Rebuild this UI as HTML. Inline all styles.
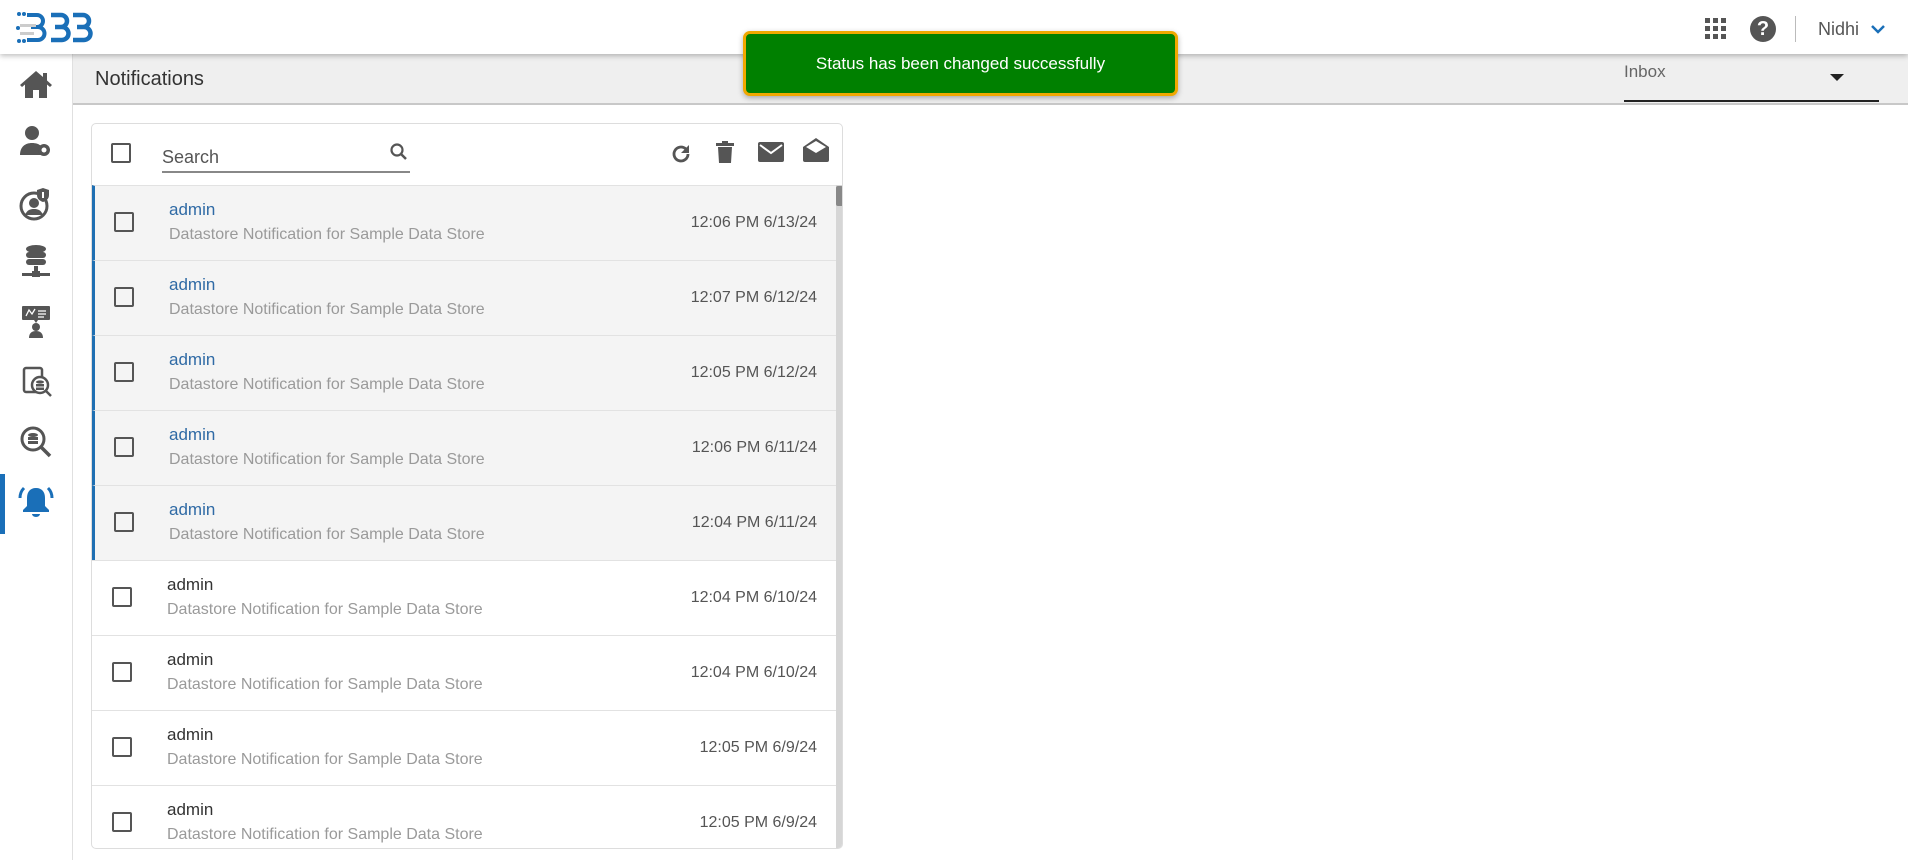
<!DOCTYPE html>
<html><head><meta charset="utf-8"><style>
*{box-sizing:border-box;margin:0;padding:0}
body{width:1908px;height:860px;overflow:hidden;background:#fff;font-family:"Liberation Sans",sans-serif;position:relative}
.abs{position:absolute}
.hdr{left:0;top:0;width:1908px;height:54px;background:#fff;box-shadow:0 2px 5px rgba(0,0,0,.25);z-index:5}
.side{left:0;top:54px;width:73px;height:806px;background:#fff;border-right:1px solid #e0e0e0}
.sub{left:73px;top:54px;width:1835px;height:51px;background:#efefef;border-bottom:2px solid #c8c8c8}
.card{left:91px;top:123px;width:752px;height:726px;border:1px solid #ddd;border-radius:5px;overflow:hidden;background:#fff}
.cb{width:20px;height:20px;border:2px solid #555;border-radius:2px;position:absolute}
.row{position:absolute;left:0;width:745px;height:75px;border-top:1px solid #e2e2e2}
.row.u{background:#f4f4f4;border-left:3px solid #1f6fb2}
.row .cb{left:20px;top:26px}
.row.u .cb{left:19px}
.nm{position:absolute;left:75px;top:14px;font-size:17px;color:#333}
.u .nm{color:#2f6aa5;left:74px}
.ds{position:absolute;left:75px;top:40px;font-size:16px;color:#9a9a9a}
.u .ds{left:74px}
.tm{position:absolute;right:20px;top:28px;font-size:16px;color:#555}
</style></head><body>
<div class="abs hdr">
 <svg class="abs" style="left:15px;top:10px" width="84" height="36" viewBox="0 0 84 36">
  <g fill="#1a6fb8"><circle cx="4" cy="4" r="2"/><circle cx="9" cy="4" r="2"/><circle cx="3" cy="18" r="2"/><circle cx="4" cy="31" r="2"/><circle cx="9" cy="31" r="2"/></g>
  <path d="M12 5h10a6 6 0 0 1 0 12h-6M16 17h7a6 6 0 0 1 0 13H12" fill="none" stroke="#1a6fb8" stroke-width="4"/>
  <path d="M36 5h10a6 6 0 0 1 0 12h-6M40 17h7a6 6 0 0 1 0 13H36" fill="none" stroke="#1a6fb8" stroke-width="4.5"/>
  <path d="M58 5h10a6 6 0 0 1 0 12h-6M62 17h7a6 6 0 0 1 0 13H58" fill="none" stroke="#1a6fb8" stroke-width="4.5"/>
  <rect x="5" y="14" width="16" height="3" fill="#ccc"/><rect x="5" y="22" width="14" height="3" fill="#ccc"/>
 </svg>
 <svg class="abs" style="left:1705px;top:18px" width="21" height="21"><g fill="#555"><rect x="0" y="0" width="5" height="5"/><rect x="8" y="0" width="5" height="5"/><rect x="16" y="0" width="5" height="5"/><rect x="0" y="8" width="5" height="5"/><rect x="8" y="8" width="5" height="5"/><rect x="16" y="8" width="5" height="5"/><rect x="0" y="16" width="5" height="5"/><rect x="8" y="16" width="5" height="5"/><rect x="16" y="16" width="5" height="5"/></g></svg>
 <div class="abs" style="left:1750px;top:16px;width:26px;height:26px;border-radius:50%;background:#555;color:#fff;font-weight:bold;font-size:20px;text-align:center;line-height:26px">?</div>
 <div class="abs" style="left:1795px;top:16px;width:1px;height:26px;background:#bbb"></div>
 <div class="abs" style="left:1818px;top:19px;font-size:18px;color:#555">Nidhi</div>
 <svg class="abs" style="left:1870px;top:24px" width="16" height="11"><path d="M2 2l6 6 6-6" fill="none" stroke="#1a6fb8" stroke-width="2.5"/></svg>
</div>
<div class="abs side">
 <svg class="abs" style="left:19px;top:15px" width="34" height="30" viewBox="0 0 34 30"><path d="M17 2L1 16l2 2 3-2.5V29h8v-8h6v8h8V15.5l3 2.5 2-2-5-4.5V4h-4v4z" fill="#555"/></svg>
 <svg class="abs" style="left:19px;top:71px" width="34" height="34" viewBox="0 0 34 34"><circle cx="13" cy="8" r="7" fill="#555"/><path d="M1 30c0-8 5-12 12-12 4 0 7 1 9 3v9z" fill="#555"/><circle cx="25" cy="25" r="6" fill="#555"/><circle cx="25" cy="25" r="2.5" fill="#fff"/></svg>
 <svg class="abs" style="left:18px;top:132px" width="36" height="36" viewBox="0 0 36 36"><circle cx="16" cy="20" r="13" fill="none" stroke="#555" stroke-width="3"/><circle cx="16" cy="17" r="5" fill="#555"/><path d="M7 29c2-5 5-6 9-6s7 1 9 6z" fill="#555"/><path d="M25 2l6 2v5c0 4-3 6-6 7-3-1-6-3-6-7V4z" fill="#555"/><rect x="24" y="6" width="2" height="6" fill="#fff"/></svg>
 <svg class="abs" style="left:20px;top:190px" width="32" height="36" viewBox="0 0 32 36"><g fill="#555"><ellipse cx="16" cy="5" rx="10" ry="4"/><rect x="6" y="8" width="20" height="6" rx="3"/><rect x="6" y="15" width="20" height="6" rx="3"/><rect x="14" y="22" width="4" height="8"/><rect x="2" y="29" width="28" height="3"/><rect x="12" y="27" width="8" height="6"/></g></svg>
 <svg class="abs" style="left:20px;top:250px" width="32" height="36" viewBox="0 0 32 36"><rect x="2" y="2" width="28" height="14" rx="1" fill="#555"/><path d="M14 16l2 3 2-3z" fill="#555"/><circle cx="16" cy="23" r="4" fill="#555"/><path d="M9 34c0-5 3-7 7-7s7 2 7 7z" fill="#555"/><path d="M6 12l3-6 3 4 3-5M18 7h8M18 10h8M18 13h6" stroke="#fff" stroke-width="1.3" fill="none"/></svg>
 <svg class="abs" style="left:21px;top:312px" width="32" height="34" viewBox="0 0 32 34"><rect x="3" y="2" width="18" height="24" rx="2" fill="none" stroke="#555" stroke-width="2.5"/><circle cx="19" cy="19" r="8" fill="#fff" stroke="#555" stroke-width="2.5"/><ellipse cx="19" cy="16" rx="4" ry="1.6" fill="#555"/><rect x="15" y="18" width="8" height="2.5" fill="#555"/><rect x="15" y="21.5" width="8" height="2.5" fill="#555"/><path d="M25 25l5 5" stroke="#555" stroke-width="2.5"/></svg>
 <svg class="abs" style="left:19px;top:371px" width="34" height="34" viewBox="0 0 34 34"><circle cx="14" cy="14" r="11" fill="none" stroke="#555" stroke-width="3"/><ellipse cx="14" cy="10" rx="5" ry="2" fill="#555"/><rect x="9" y="12" width="10" height="3" fill="#555"/><rect x="9" y="16" width="10" height="3" fill="#555"/><path d="M22 22l9 9" stroke="#555" stroke-width="3.5"/></svg>
 <div class="abs" style="left:0;top:420px;width:5px;height:60px;background:#1a6fb8"></div>
 <svg class="abs" style="left:18px;top:429px" width="36" height="36" viewBox="0 0 36 36"><path d="M18 5c-6 0-9 4-9 10v8l-4 4v2h26v-2l-4-4v-8c0-6-3-10-9-10z" fill="#1a6fb8"/><path d="M14 31a4 3 0 0 0 8 0z" fill="#1a6fb8"/><path d="M6 5C3 8 2 11 2 15M30 5c3 3 4 6 4 10" stroke="#1a6fb8" stroke-width="3" fill="none"/></svg>
</div>
<div class="abs sub">
 <div class="abs" style="left:22px;top:14px;font-size:20px;color:#333">Notifications</div>
 <div class="abs" style="left:1551px;top:8px;font-size:17px;color:#666">Inbox</div>
 <svg class="abs" style="left:1757px;top:20px" width="14" height="8"><path d="M0 0h14L7 7z" fill="#222"/></svg>
 <div class="abs" style="left:1551px;top:46px;width:255px;height:1.5px;background:#222"></div>
</div>
<div class="abs card">
 <div class="cb" style="left:19px;top:19px"></div>
 <div class="abs" style="left:70px;top:23px;font-size:18px;color:#555">Search</div>
 <div class="abs" style="left:70px;top:47px;width:248px;height:1.5px;background:#888"></div>
 <svg class="abs" style="left:297px;top:18px" width="20" height="20"><circle cx="8" cy="8" r="5.5" fill="none" stroke="#555" stroke-width="2.2"/><path d="M12 12l5 5" stroke="#555" stroke-width="2.5"/></svg>
 <svg class="abs" style="left:577px;top:18px" width="24" height="24" viewBox="0 0 24 24"><path d="M19 12a7 7 0 1 1-2.2-5.1" fill="none" stroke="#555" stroke-width="2.8"/><path d="M20 3v8h-8z" fill="#555"/></svg>
 <svg class="abs" style="left:623px;top:16px" width="20" height="24" viewBox="0 0 20 24"><rect x="1" y="3" width="18" height="3" fill="#555"/><rect x="7" y="1" width="6" height="3" fill="#555"/><path d="M3 7h14l-1 16H4z" fill="#555"/></svg>
 <svg class="abs" style="left:666px;top:18px" width="26" height="20" viewBox="0 0 26 20"><rect x="0" y="0" width="26" height="20" rx="2" fill="#555"/><path d="M2 3l11 8 11-8" fill="none" stroke="#fff" stroke-width="2"/></svg>
 <svg class="abs" style="left:711px;top:14px" width="26" height="24" viewBox="0 0 26 24"><path d="M0 9L13 0l13 9v13a2 2 0 0 1-2 2H2a2 2 0 0 1-2-2z" fill="#555"/><path d="M3 9l10-6 10 6-10 6z" fill="#fff"/></svg>
 <div class="row u" style="top:61px"><div class="cb"></div><div class="nm">admin</div><div class="ds">Datastore Notification for Sample Data Store</div><div class="tm">12:06 PM 6/13/24</div></div>
 <div class="row u" style="top:136px"><div class="cb"></div><div class="nm">admin</div><div class="ds">Datastore Notification for Sample Data Store</div><div class="tm">12:07 PM 6/12/24</div></div>
 <div class="row u" style="top:211px"><div class="cb"></div><div class="nm">admin</div><div class="ds">Datastore Notification for Sample Data Store</div><div class="tm">12:05 PM 6/12/24</div></div>
 <div class="row u" style="top:286px"><div class="cb"></div><div class="nm">admin</div><div class="ds">Datastore Notification for Sample Data Store</div><div class="tm">12:06 PM 6/11/24</div></div>
 <div class="row u" style="top:361px"><div class="cb"></div><div class="nm">admin</div><div class="ds">Datastore Notification for Sample Data Store</div><div class="tm">12:04 PM 6/11/24</div></div>
 <div class="row" style="top:436px"><div class="cb"></div><div class="nm">admin</div><div class="ds">Datastore Notification for Sample Data Store</div><div class="tm">12:04 PM 6/10/24</div></div>
 <div class="row" style="top:511px"><div class="cb"></div><div class="nm">admin</div><div class="ds">Datastore Notification for Sample Data Store</div><div class="tm">12:04 PM 6/10/24</div></div>
 <div class="row" style="top:586px"><div class="cb"></div><div class="nm">admin</div><div class="ds">Datastore Notification for Sample Data Store</div><div class="tm">12:05 PM 6/9/24</div></div>
 <div class="row" style="top:661px"><div class="cb"></div><div class="nm">admin</div><div class="ds">Datastore Notification for Sample Data Store</div><div class="tm">12:05 PM 6/9/24</div></div>
 <div class="abs" style="left:744px;top:61px;width:7px;height:665px;background:#d6d6d6"></div>
 <div class="abs" style="left:744px;top:62px;width:7px;height:20px;background:#888;border-radius:2px"></div>
</div>
<div class="abs" style="left:743px;top:31px;width:435px;height:65px;background:#008000;border:3px solid #f0a800;border-radius:7px;box-shadow:0 2px 6px rgba(0,0,0,.3);z-index:10;color:#fff;font-size:17px;text-align:center;line-height:59px">Status has been changed successfully</div>
</body></html>
